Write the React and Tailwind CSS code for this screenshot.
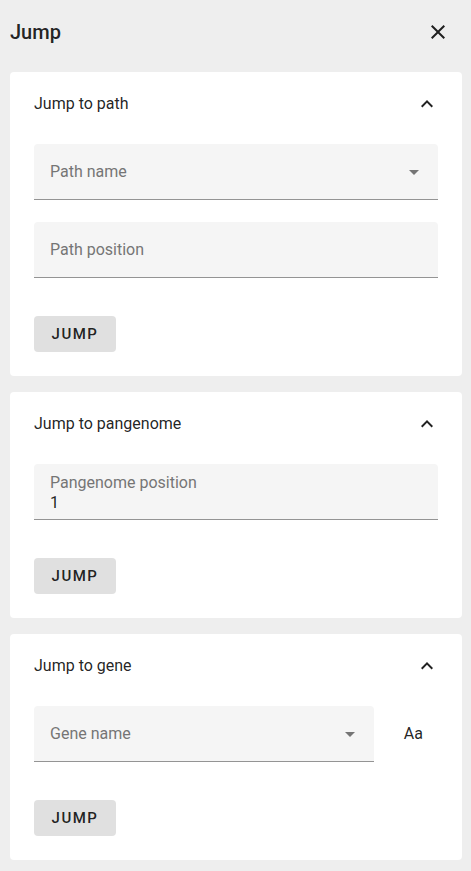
import React from "react";

const font = { fontFamily: "Roboto, 'Liberation Sans', sans-serif" };

function Chevron() {
  return (
    <svg width="24" height="24" viewBox="0 0 24 24" className="text-[rgba(0,0,0,0.87)]">
      <path fill="currentColor" d="M12 8l-6 6 1.41 1.41L12 10.83l4.59 4.58L18 14z" />
    </svg>
  );
}

function DropArrow() {
  return (
    <svg width="24" height="24" viewBox="0 0 24 24" className="text-[#757575]">
      <path fill="currentColor" d="M7 10l5 5 5-5z" />
    </svg>
  );
}

function Field({ label, select, value, className = "" }) {
  return (
    <div
      className={`h-14 bg-[#f5f5f5] rounded-t border-b border-[#949494] flex items-center pl-4 pr-3 ${className}`}
    >
      {value ? (
        <div className="flex flex-col pt-[2px]">
          <span className="text-base leading-[20px] text-[#757575]">{label}</span>
          <span className="text-base leading-[20px] text-[rgba(0,0,0,0.87)]">{value}</span>
        </div>
      ) : (
        <span className="text-base text-[#757575] flex-1">{label}</span>
      )}
      {select && <DropArrow />}
    </div>
  );
}

function JumpButton() {
  return (
    <button className="h-9 w-[82px] rounded bg-[#e0e0e0] text-[15px] font-medium tracking-[0.1em] text-[rgba(0,0,0,0.87)] flex items-center justify-center">
      JUMP
    </button>
  );
}

function Card({ title, children }) {
  return (
    <div className="bg-white rounded ml-[10px] mr-[9px] px-6 pb-6">
      <div className="h-[62px] pt-[1px] flex items-center justify-between">
        <span className="text-base text-[rgba(0,0,0,0.87)]">{title}</span>
        <div className="mr-[-1px]">
          <Chevron />
        </div>
      </div>
      <div className="pt-[10px]">{children}</div>
    </div>
  );
}

export default function App() {
  return (
    <div className="min-h-screen bg-[#eeeeee] pb-[11px]" style={font}>
      <div className="h-16 flex items-center justify-between pl-[10px] pr-[21px]">
        <span className="text-[20px] font-medium text-[rgba(0,0,0,0.87)]">Jump</span>
        <svg width="24" height="24" viewBox="0 0 24 24" className="text-[rgba(0,0,0,0.87)]">
          <path
            fill="currentColor"
            d="M19 6.41L17.59 5 12 10.59 6.41 5 5 6.41 10.59 12 5 17.59 6.41 19 12 13.41 17.59 19 19 17.59 13.41 12z"
          />
        </svg>
      </div>
      <div className="mt-2 flex flex-col gap-4">
        <Card title="Jump to path">
          <Field label="Path name" select />
          <Field label="Path position" className="mt-[22px]" />
          <div className="mt-[38px]">
            <JumpButton />
          </div>
        </Card>
        <Card title="Jump to pangenome">
          <Field label="Pangenome position" value="1" />
          <div className="mt-[38px]">
            <JumpButton />
          </div>
        </Card>
        <Card title="Jump to gene">
          <div className="flex items-center">
            <Field label="Gene name" select className="flex-1" />
            <span className="ml-[30px] mr-[15px] text-base text-[rgba(0,0,0,0.87)]">Aa</span>
          </div>
          <div className="mt-[38px]">
            <JumpButton />
          </div>
        </Card>
      </div>
    </div>
  );
}
